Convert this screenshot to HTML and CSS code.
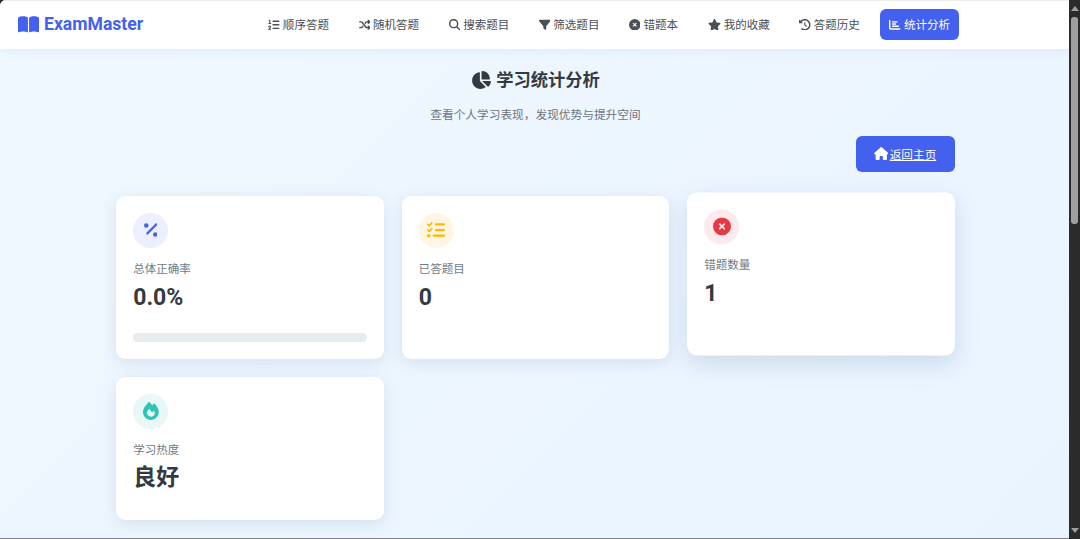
FILE: index.html
```html
<!DOCTYPE html>
<html lang="zh-CN">
<head>
<meta charset="utf-8">
<title>ExamMaster</title>
<link rel="stylesheet" href="styles.css">
</head>
<body>
<div class="window">
  <div class="main">
    <header class="navbar">
      <a class="brand"><svg class="i-brand" viewBox="0 0 576 512"><path d="M249.6 471.5c10.8 3.8 22.4-4.1 22.4-15.5V78.6c0-4.2-1.6-8.4-5-11C247.4 52 202.4 32 144 32C93.5 32 46.3 45.3 18.1 56.1C6.8 60.5 0 71.7 0 83.8V454.1c0 11.9 12.8 20.2 24.1 16.5C55.6 460.1 105.5 448 144 448c33.9 0 79 14 105.6 23.5zm76.8 0C353 462 398.1 448 432 448c38.5 0 88.4 12.1 119.9 22.6c11.3 3.8 24.1-4.6 24.1-16.5V83.8c0-12.1-6.8-23.3-18.1-27.6C529.7 45.3 482.5 32 432 32c-58.4 0-103.4 20-123 35.6c-3.3 2.6-5 6.8-5 11V456c0 11.4 11.7 19.3 22.4 15.5z"/></svg>ExamMaster</a>
      <nav class="menu">
        <a class="item"><svg class="ic ic-w11" viewBox="0 0 512 512"><path d="M24 56c0-13.3 10.7-24 24-24H80c13.3 0 24 10.7 24 24V176h16c13.3 0 24 10.7 24 24s-10.7 24-24 24H40c-13.3 0-24-10.7-24-24s10.7-24 24-24H56V80H48C34.7 80 24 69.3 24 56zM86.7 341.2c-6.5-7.4-18.3-6.9-24 1.2L51.5 357.9c-7.7 10.8-22.7 13.3-33.5 5.6s-13.3-22.7-5.6-33.5l11.1-15.6c23.7-33.2 72.3-35.6 99.2-4.9c21.3 24.4 20.8 60.9-1.1 84.7L86.8 432H120c13.3 0 24 10.7 24 24s-10.7 24-24 24H32c-9.5 0-18.2-5.6-22-14.4s-2.1-18.9 4.3-25.9l72-78c5.3-5.8 5.4-14.6 .3-20.5zM224 64H480c17.7 0 32 14.3 32 32s-14.3 32-32 32H224c-17.7 0-32-14.3-32-32s14.3-32 32-32zm0 160H480c17.7 0 32 14.3 32 32s-14.3 32-32 32H224c-17.7 0-32-14.3-32-32s14.3-32 32-32zm0 160H480c17.7 0 32 14.3 32 32s-14.3 32-32 32H224c-17.7 0-32-14.3-32-32s14.3-32 32-32z"/></svg>顺序答题</a>
        <a class="item"><svg class="ic ic-w11" viewBox="0 0 512 512"><path d="M403.8 34.4c12-5 25.7-2.2 34.9 6.9l64 64c6 6 9.4 14.1 9.4 22.6s-3.4 16.6-9.4 22.6l-64 64c-9.2 9.2-22.9 11.9-34.9 6.9s-19.8-16.6-19.8-29.6V160H352c-10.1 0-19.6 4.7-25.6 12.8L284 229.3 244 176l31.2-41.6C293.3 110.2 321.8 96 352 96h32V64c0-12.9 7.8-24.6 19.8-29.6zM164 282.7L204 336l-31.2 41.6C154.7 401.8 126.2 416 96 416H32c-17.7 0-32-14.3-32-32s14.3-32 32-32H96c10.1 0 19.6-4.7 25.6-12.8L164 282.7zm274.6 188c-9.2 9.2-22.9 11.9-34.9 6.9s-19.8-16.6-19.8-29.6V416H352c-30.2 0-58.7-14.2-76.8-38.4L121.6 172.8c-6-8.1-15.5-12.8-25.6-12.8H32c-17.7 0-32-14.3-32-32s14.3-32 32-32H96c30.2 0 58.7 14.2 76.8 38.4L326.4 339.2c6 8.1 15.5 12.8 25.6 12.8h32V320c0-12.9 7.8-24.6 19.8-29.6s25.7-2.2 34.9 6.9l64 64c6 6 9.4 14.1 9.4 22.6s-3.4 16.6-9.4 22.6l-64 64z"/></svg>随机答题</a>
        <a class="item"><svg class="ic ic-w11" viewBox="0 0 512 512"><path d="M416 208c0 45.9-14.9 88.3-40 122.7L502.6 457.4c12.5 12.5 12.5 32.8 0 45.3s-32.8 12.5-45.3 0L330.7 376c-34.4 25.2-76.8 40-122.7 40C93.1 416 0 322.9 0 208S93.1 0 208 0S416 93.1 416 208zM208 352a144 144 0 1 0 0-288 144 144 0 1 0 0 288z"/></svg>搜索题目</a>
        <a class="item"><svg class="ic ic-w11" viewBox="0 0 512 512"><path d="M3.9 54.9C10.5 40.9 24.5 32 40 32H472c15.5 0 29.5 8.9 36.1 22.9s4.6 30.5-5.2 42.5L320 320.9V448c0 12.1-6.8 23.2-17.7 28.6s-23.8 4.3-33.5-3l-64-48c-8.1-6-12.8-15.5-12.8-25.6V320.9L9 97.3C-.7 85.4-2.8 68.8 3.9 54.9z"/></svg>筛选题目</a>
        <a class="item"><svg class="ic ic-w11" viewBox="0 0 512 512"><path fill-rule="evenodd" d="M256 512A256 256 0 1 0 256 0a256 256 0 1 0 0 512zM175 175c9.4-9.4 24.6-9.4 33.9 0l47 47 47-47c9.4-9.4 24.6-9.4 33.9 0s9.4 24.6 0 33.9l-47 47 47 47c9.4 9.4 9.4 24.6 0 33.9s-24.6 9.4-33.9 0l-47-47-47 47c-9.4 9.4-24.6 9.4-33.9 0s-9.4-24.6 0-33.9l47-47-47-47c-9.4-9.4-9.4-24.6 0-33.9z"/></svg>错题本</a>
        <a class="item"><svg class="ic ic-w13" viewBox="0 0 576 512"><path d="M316.9 18C311.6 7 300.4 0 288.1 0s-23.4 7-28.8 18L195 150.3 51.4 171.5c-12 1.8-22 10.2-25.7 21.7s-.7 24.2 7.9 32.7L137.8 329 113.2 474.7c-2 12 3 24.2 12.9 31.3s23 8 33.8 2.3l128.3-68.5 128.3 68.5c10.8 5.7 23.9 4.9 33.8-2.3s14.9-19.3 12.9-31.3L438.5 329 542.7 225.9c8.6-8.5 11.7-21.2 7.9-32.7s-13.7-19.9-25.7-21.7L381.2 150.3 316.9 18z"/></svg>我的收藏</a>
        <a class="item"><svg class="ic ic-w11" viewBox="0 0 512 512"><path d="M75 75L41 41C25.9 25.9 0 36.6 0 57.9V168c0 13.3 10.7 24 24 24H134.1c21.4 0 32.1-25.9 17-41l-30.8-30.8C155 85.5 203 64 256 64c106 0 192 86 192 192s-86 192-192 192c-40.8 0-78.6-12.7-109.7-34.4c-14.5-10.1-34.4-6.6-44.6 7.9s-6.6 34.4 7.9 44.6C151.2 495 201.7 512 256 512c141.4 0 256-114.6 256-256S397.4 0 256 0C185.3 0 121.3 28.7 75 75zm181 53c-13.3 0-24 10.7-24 24V256c0 6.4 2.5 12.5 7 17l72 72c9.4 9.4 24.6 9.4 33.9 0s9.4-24.6 0-33.9l-65-65V152c0-13.3-10.7-24-24-24z"/></svg>答题历史</a>
        <a class="item active"><svg class="ic ic-w11" viewBox="0 0 512 512"><path d="M32 32c17.7 0 32 14.3 32 32V400c0 8.8 7.2 16 16 16H480c17.7 0 32 14.3 32 32s-14.3 32-32 32H80c-44.2 0-80-35.8-80-80V64C0 46.3 14.3 32 32 32zm96 96c0-17.7 14.3-32 32-32l192 0c17.7 0 32 14.3 32 32s-14.3 32-32 32l-192 0c-17.7 0-32-14.3-32-32zm32 64H288c17.7 0 32 14.3 32 32s-14.3 32-32 32H160c-17.7 0-32-14.3-32-32s14.3-32 32-32zm0 96H416c17.7 0 32 14.3 32 32s-14.3 32-32 32H160c-17.7 0-32-14.3-32-32s14.3-32 32-32z"/></svg>统计分析</a>
      </nav>
    </header>

    <main class="content">
      <h1 class="title"><svg class="i-title" viewBox="0 0 576 512"><path d="M304 240V16.6c0-9 7-16.6 16-16.6C443.7 0 544 100.3 544 224c0 9-7.6 16-16.6 16H304zM32 272C32 150.7 122.1 50.3 239 34.3c9.2-1.3 17 6.1 17 15.4V288L412.5 444.5c6.7 6.7 6.2 17.7-1.5 23.1C371.8 495.6 323.8 512 272 512C139.5 512 32 404.6 32 272zm526.4 16c9.3 0 16.6 7.8 15.4 17c-7.7 55.9-34.6 105.6-73.9 142.3c-6 5.6-15.4 5.2-21.2-.7L320 288H558.4z"/></svg>学习统计分析</h1>
      <p class="subtitle">查看个人学习表现，发现优势与提升空间</p>
      <div class="actions">
        <a class="back" href="#"><svg class="i-home" viewBox="0 0 576 512"><path d="M575.8 255.5c0 18-15 32.1-32 32.1h-32l.7 160.2c0 2.7-.2 5.4-.5 8.1V472c0 22.1-17.9 40-40 40H456c-1.1 0-2.2 0-3.3-.1c-1.4 .1-2.8 .1-4.2 .1H416 392c-22.1 0-40-17.9-40-40V448 384c0-17.7-14.3-32-32-32H256c-17.7 0-32 14.3-32 32v64 24c0 22.1-17.9 40-40 40H160 128.1c-1.5 0-3-.1-4.5-.2c-1.2 .1-2.4 .2-3.6 .2H104c-22.1 0-40-17.9-40-40V360c0-.9 0-1.9 .1-2.8V287.6H32c-18 0-32-14-32-32.1c0-9 3-17 10-24L266.4 8c7-7 15-8 22-8s15 2 21 7L564.8 231.5c8 7 12 15 11 24z"/></svg>返回主页</a>
      </div>
      <section class="grid">
        <article class="card">
          <div class="badge badge-blue"><svg class="i-percent" viewBox="0 0 384 512"><path d="M374.6 118.6c12.5-12.5 12.5-32.8 0-45.3s-32.8-12.5-45.3 0l-256 256c-12.5 12.5-12.5 32.8 0 45.3s32.8 12.5 45.3 0l256-256zM128 128A64 64 0 1 0 0 128a64 64 0 1 0 128 0zM384 384a64 64 0 1 0 -128 0 64 64 0 1 0 128 0z"/></svg></div>
          <div class="label">总体正确率</div>
          <div class="value">0.0%</div>
          <div class="progress"></div>
        </article>
        <article class="card">
          <div class="badge badge-amber"><svg class="i-tasks" viewBox="0 0 512 512"><path d="M152.1 38.2c9.9 8.9 10.7 24 1.8 33.9l-72 80c-4.4 4.9-10.6 7.8-17.2 7.9s-12.9-2.4-17.6-7L7 113C-2.3 103.6-2.3 88.4 7 79s24.6-9.4 33.9 0l22.1 22.1 55.1-61.2c8.9-9.9 24-10.7 33.9-1.8zm0 160c9.9 8.9 10.7 24 1.8 33.9l-72 80c-4.4 4.9-10.6 7.8-17.2 7.9s-12.9-2.4-17.6-7L7 273c-9.4-9.4-9.4-24.6 0-33.9s24.6-9.4 33.9 0l22.1 22.1 55.1-61.2c8.9-9.9 24-10.7 33.9-1.8zM224 96c0-17.7 14.3-32 32-32H480c17.7 0 32 14.3 32 32s-14.3 32-32 32H256c-17.7 0-32-14.3-32-32zm0 160c0-17.7 14.3-32 32-32H480c17.7 0 32 14.3 32 32s-14.3 32-32 32H256c-17.7 0-32-14.3-32-32zM160 416c0-17.7 14.3-32 32-32H480c17.7 0 32 14.3 32 32s-14.3 32-32 32H192c-17.7 0-32-14.3-32-32zM48 368a48 48 0 1 1 0 96 48 48 0 1 1 0-96z"/></svg></div>
          <div class="label">已答题目</div>
          <div class="value">0</div>
        </article>
        <article class="card card-raised">
          <div class="badge badge-red"><svg class="i-times" viewBox="0 0 512 512"><path fill-rule="evenodd" d="M256 512A256 256 0 1 0 256 0a256 256 0 1 0 0 512zM175 175c9.4-9.4 24.6-9.4 33.9 0l47 47 47-47c9.4-9.4 24.6-9.4 33.9 0s9.4 24.6 0 33.9l-47 47 47 47c9.4 9.4 9.4 24.6 0 33.9s-24.6 9.4-33.9 0l-47-47-47 47c-9.4 9.4-24.6 9.4-33.9 0s-9.4-24.6 0-33.9l47-47-47-47c-9.4-9.4-9.4-24.6 0-33.9z"/></svg></div>
          <div class="label">错题数量</div>
          <div class="value">1</div>
        </article>
        <article class="card">
          <div class="badge badge-teal"><svg class="i-fire" viewBox="0 0 448 512"><path d="M159.3 5.4c7.8-7.3 19.9-7.2 27.7 .1c27.6 25.9 53.5 53.8 77.7 84c11-14.4 23.5-30.1 37-42.9c7.9-7.4 20.1-7.4 28 .1c34.6 33 63.9 76.6 84.5 118c20.3 40.8 33.8 82.5 33.8 111.9C448 404.2 348.2 512 224 512C98.4 512 0 404.1 0 276.5c0-38.4 17.8-85.3 45.4-131.7C73.3 97.7 112.7 48.6 159.3 5.4zM225.7 416c25.3 0 47.7-7 68.8-21c42.1-29.4 53.4-88.2 28.1-134.4c-4.5-9-16-9.6-22.5-2l-25.2 29.3c-6.6 7.6-18.5 7.4-24.7-.5c-16.5-21-46-58.5-62.8-79.8c-6.3-8-18.3-8.1-24.7-.1c-33.8 42.5-50.8 69.3-50.8 99.4C112 375.4 162.6 416 225.7 416z"/></svg></div>
          <div class="label">学习热度</div>
          <div class="value value-cjk">良好</div>
        </article>
      </section>
    </main>
  </div>
  <aside class="scrollbar">
    <span class="arrow-up"></span>
    <span class="thumb"></span>
    <span class="arrow-down"></span>
  </aside>
</div>
</body>
</html>
```
FILE: styles.css
```css
* { box-sizing: border-box; }
html, body { margin: 0; height: 539px; overflow: hidden; }
body {
  background: #2b2b2b;
  font-family: Roboto, "Noto Sans CJK SC", sans-serif;
  color: #212529;
}
.window { display: flex; height: 539px; }
.main {
  flex: 1;
  min-width: 0;
  overflow: hidden;
  border-top-left-radius: 6px;
  border-bottom: 1px solid #808080;
  background: linear-gradient(135deg, #f0f8ff 0%, #e9f4ff 100%);
}
.navbar {
  height: 49px;
  display: flex;
  align-items: center;
  justify-content: space-between;
  padding: 0 110px 1.4px 18px;
  background: #fff;
  border-top: 1px solid #eee;
  box-shadow: 0 2px 10px rgba(67, 97, 238, .08);
}
.brand {
  display: flex;
  align-items: center;
  gap: 5px;
  font-size: 17.6px;
  font-weight: 700;
  color: #4361ee;
}
.brand svg { fill: #4361ee; }
.i-brand { width: 21px; height: 19px; }
.menu { display: flex; align-items: center; gap: 11.6px; }
.item {
  display: flex;
  align-items: center;
  gap: 3px;
  height: 30.4px;
  padding: 0 9px;
  border-radius: 6px;
  font-size: 11.52px;
  color: #495057;
}
.ic { fill: #495057; height: 11.5px; flex: none; }
.ic-w11 { width: 11.5px; }
.ic-w13 { width: 13px; }
.item.active { background: #4361ee; color: #fff; }
.item.active .ic { fill: #fff; }
.content { padding: 0 114px 0 116px; }
.title {
  margin: 19px 0 0;
  display: flex;
  justify-content: center;
  align-items: center;
  gap: 5px;
  font-size: 17.3px;
  line-height: 24px;
  font-weight: 700;
  color: #343a40;
}
.i-title { width: 20px; height: 18px; fill: #343a40; }
.subtitle {
  margin: 15px 0 0;
  text-align: center;
  font-size: 11.7px;
  line-height: 16px;
  color: #6c757d;
}
.actions { display: flex; justify-content: flex-end; margin-top: 13px; }
.back {
  display: flex;
  align-items: center;
  justify-content: center;
  gap: 1.5px;
  width: 99px;
  height: 36px;
  padding: 0 1px 2px 0;
  border-radius: 6px;
  background: #4361ee;
  color: #fff;
  font-size: 11.65px;
  text-decoration: underline;
}
.i-home { width: 14.5px; height: 13px; fill: #fff; }
.grid {
  display: grid;
  grid-template-columns: repeat(3, 1fr);
  gap: 17.6px;
  margin-top: 23.7px;
}
.card {
  padding: 17.2px;
  border-radius: 9.6px;
  background: #fff;
  box-shadow: 0 4px 16px rgba(67, 97, 138, .14);
}
.card-raised {
  transform: translateY(-3.6px);
  box-shadow: 0 8px 24px rgba(67, 97, 138, .18);
}
.badge {
  width: 35px;
  height: 35px;
  border-radius: 50%;
  display: flex;
  align-items: center;
  justify-content: center;
}
.badge-blue { background: #ecefff; }
.badge-amber { background: #fff5e0; }
.badge-red { background: #fdeaec; }
.badge-teal { background: #e8f8f6; }
.i-percent { width: 13.5px; height: 18px; fill: #4361ee; }
.i-tasks { width: 18px; height: 18px; fill: #ffb703; }
.i-times { width: 18px; height: 18px; fill: #e63946; }
.i-fire { width: 15.75px; height: 18px; fill: #2ec4b6; }
.label {
  margin-top: 13.5px;
  font-size: 11.52px;
  line-height: 17px;
  color: #727b83;
}
.value {
  margin: 5px 0 8px;
  font-size: 23.04px;
  line-height: 30px;
  font-weight: 700;
  color: #343a40;
}
.value-cjk { margin: 4px 0 9.1px; }
.progress {
  margin-top: 19.4px;
  height: 9px;
  border-radius: 4.8px;
  background: #e9ecef;
}
.scrollbar {
  flex: none;
  width: 11px;
  display: flex;
  flex-direction: column;
  align-items: center;
  padding-top: 6px;
  background: #2b2b2b;
}
.arrow-up {
  width: 0; height: 0;
  border: 4px solid transparent;
  border-top: 0;
  border-bottom: 5px solid #a0a0a0;
}
.thumb {
  width: 7px;
  height: 207px;
  margin-top: 6px;
  border-radius: 3px;
  background: #9f9f9f;
}
.arrow-down {
  width: 0; height: 0;
  margin-top: auto;
  margin-bottom: 6px;
  border: 4px solid transparent;
  border-bottom: 0;
  border-top: 5px solid #a0a0a0;
}
```
